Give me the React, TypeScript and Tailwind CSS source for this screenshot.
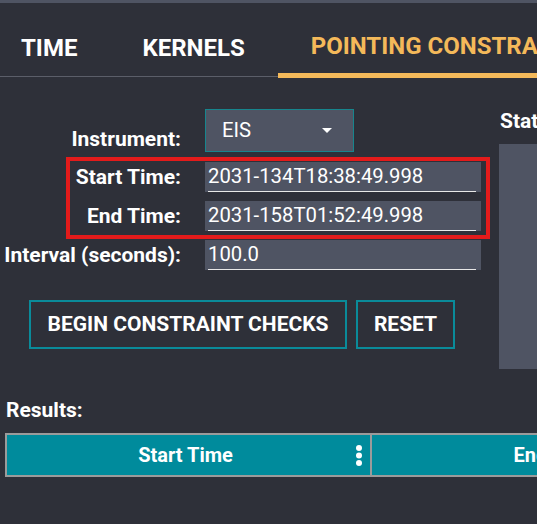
import React from "react";

const font = { fontFamily: "Roboto, 'Liberation Sans', sans-serif" };

function TextField({ value }: { value: string }) {
  return (
    <div className="flex h-[30px] w-[276px] bg-[#4f5463] pl-[3px] pr-[5px]">
      <div className="flex w-full items-center border-b border-[#e8e8e8] pb-[1px] text-[20.3px] leading-none text-white">
        {value}
      </div>
    </div>
  );
}

function Tab({ label, active, pad }: { label: string; active?: boolean; pad: string }) {
  return (
    <div className={`relative h-full ${pad} ${active ? "pt-[31px]" : "pt-[33px]"}`}>
      <span
        className={`block whitespace-nowrap text-[24px] font-bold leading-none ${
          active ? "text-[#f4b95a]" : "text-white"
        }`}
      >
        {label}
      </span>
      {active && <span className="absolute bottom-[-2px] left-0 h-[5px] w-full bg-[#f4b95a]" />}
    </div>
  );
}

export default function App() {
  return (
    <div className="h-[524px] w-[537px] overflow-hidden bg-[#2e3039]" style={font}>
      <div className="h-[3px] bg-[#4f5463]" />

      <div className="flex h-[74px] w-[900px] border-b border-[#5b5e69]">
        <Tab label="TIME" pad="pl-[21px] pr-[33px]" />
        <Tab label="KERNELS" pad="pl-[32px] pr-[33px]" />
        <Tab label="POINTING CONSTRAINTS" pad="pl-[33px] pr-[33px]" active />
      </div>

      <div className="flex w-[900px]">
        <div className="w-[490px] shrink-0">
          <div className="mt-[32px] flex items-end">
            <div className="w-[181px] pb-[2px] text-right text-[21px] font-bold leading-none text-white">
              Instrument:
            </div>
            <div className="ml-[24px] flex h-[43px] w-[149px] items-center justify-between border border-[#17858d] bg-[#4f5463] pl-[16px] pr-[21px]">
              <span className="text-[20.3px] leading-none text-white">EIS</span>
              <svg width="10" height="5" viewBox="0 0 10 5">
                <path d="M0 0 L10 0 L5 5 Z" fill="#ffffff" />
              </svg>
            </div>
          </div>

          <div className="ml-[66px] mt-[5px] w-[424px] border-4 border-[#e31b1b] pb-[4px] pt-[1px]">
            <div className="flex items-center">
              <div className="w-[111px] whitespace-nowrap text-right text-[21px] font-bold leading-none text-white">
                Start Time:
              </div>
              <div className="ml-[24px]">
                <TextField value="2031-134T18:38:49.998" />
              </div>
            </div>
            <div className="mt-[9px] flex items-center">
              <div className="w-[111px] whitespace-nowrap text-right text-[21px] font-bold leading-none text-white">
                End Time:
              </div>
              <div className="ml-[24px]">
                <TextField value="2031-158T01:52:49.998" />
              </div>
            </div>
          </div>

          <div className="mt-[1px] flex items-center">
            <div className="w-[181px] whitespace-nowrap text-right text-[21px] font-bold leading-none text-white">
              Interval (seconds):
            </div>
            <div className="ml-[24px]">
              <TextField value="100.0" />
            </div>
          </div>

          <div className="ml-[29px] mt-[30px] flex gap-[9px]">
            <button className="h-[49px] w-[318px] border-2 border-[#0a8b9a] text-[21px] font-bold uppercase leading-none text-white">
              Begin Constraint Checks
            </button>
            <button className="h-[49px] w-[99px] border-2 border-[#0a8b9a] text-[21px] font-bold uppercase leading-none text-white">
              Reset
            </button>
          </div>
        </div>

        <div className="ml-[9px] flex-1">
          <div className="ml-[1px] mt-[34px] text-[21px] font-bold leading-none text-white">Status:</div>
          <div className="mt-[12px] h-[225px] bg-[#4f5463]" />
        </div>
      </div>

      <div className="ml-[6px] mt-[31px] text-[21px] font-bold leading-none text-white">Results:</div>

      <div className="ml-[5px] mt-[12px] flex h-[44px] w-[900px] border-y-2 border-l-2 border-[#9b9b9b] bg-[#008b9c]">
        <div className="relative flex w-[365px] items-center justify-center border-r-2 border-[#9b9b9b] pr-[6px]">
          <span className="text-[20px] font-bold leading-none text-white">Start Time</span>
          <svg className="absolute right-[8px] top-[10px]" width="6" height="21" viewBox="0 0 6 21">
            <circle cx="3" cy="3" r="3" fill="#ffffff" />
            <circle cx="3" cy="10.5" r="3" fill="#ffffff" />
            <circle cx="3" cy="18" r="3" fill="#ffffff" />
          </svg>
        </div>
        <div className="flex w-[367px] items-center justify-center">
          <span className="text-[20px] font-bold leading-none text-white">End Time</span>
        </div>
      </div>
    </div>
  );
}
